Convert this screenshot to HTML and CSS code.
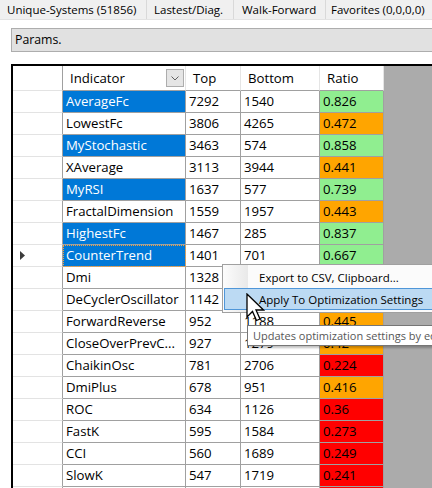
FILE: index.html
```html
<!DOCTYPE html>
<html>
<head>
<meta charset="utf-8">
<link rel="stylesheet" href="styles.css">
</head>
<body>
<div class="tabs">
  <div class="tab t1">Unique-Systems (51856)</div>
  <div class="tab t2">Lastest/Diag.</div>
  <div class="tab t3">Walk-Forward</div>
  <div class="tab t4">Favorites (0,0,0,0)</div>
</div>
<div class="params">Params.</div>
<div class="grid">
  <div class="hc rh"></div>
  <div class="hc ind"><span>Indicator</span><span class="dd"><svg width="8" height="5" viewBox="0 0 8 5"><path d="M0.5 0.5 L4 4 L7.5 0.5" fill="none" stroke="#606060" stroke-width="1"/></svg></span></div>
  <div class="hc">Top</div>
  <div class="hc">Bottom</div>
  <div class="hc">Ratio</div>

  <div class="rh"></div><div class="c sel">AverageFc</div><div class="c">7292</div><div class="c">1540</div><div class="c g">0.826</div>
  <div class="rh"></div><div class="c">LowestFc</div><div class="c">3806</div><div class="c">4265</div><div class="c o">0.472</div>
  <div class="rh"></div><div class="c sel">MyStochastic</div><div class="c">3463</div><div class="c">574</div><div class="c g">0.858</div>
  <div class="rh"></div><div class="c">XAverage</div><div class="c">3113</div><div class="c">3944</div><div class="c o">0.441</div>
  <div class="rh"></div><div class="c sel">MyRSI</div><div class="c">1637</div><div class="c">577</div><div class="c g">0.739</div>
  <div class="rh"></div><div class="c">FractalDimension</div><div class="c">1559</div><div class="c">1957</div><div class="c o">0.443</div>
  <div class="rh"></div><div class="c sel">HighestFc</div><div class="c">1467</div><div class="c">285</div><div class="c g">0.837</div>
  <div class="rh cur"><svg width="5" height="9" viewBox="0 0 5 9"><path d="M0 0 L5 4.5 L0 9 Z" fill="#3c3c3c"/></svg></div><div class="c sel focus">CounterTrend</div><div class="c">1401</div><div class="c">701</div><div class="c g">0.667</div>
  <div class="rh"></div><div class="c">Dmi</div><div class="c">1328</div><div class="c"></div><div class="c"></div>
  <div class="rh"></div><div class="c">DeCyclerOscillator</div><div class="c">1142</div><div class="c"></div><div class="c"></div>
  <div class="rh"></div><div class="c">ForwardReverse</div><div class="c">952</div><div class="c">1188</div><div class="c o">0.445</div>
  <div class="rh"></div><div class="c">CloseOverPrevC...</div><div class="c">927</div><div class="c">1279</div><div class="c o">0.42</div>
  <div class="rh"></div><div class="c">ChaikinOsc</div><div class="c">781</div><div class="c">2706</div><div class="c r">0.224</div>
  <div class="rh"></div><div class="c">DmiPlus</div><div class="c">678</div><div class="c">951</div><div class="c o">0.416</div>
  <div class="rh"></div><div class="c">ROC</div><div class="c">634</div><div class="c">1126</div><div class="c r">0.36</div>
  <div class="rh"></div><div class="c">FastK</div><div class="c">595</div><div class="c">1584</div><div class="c r">0.273</div>
  <div class="rh"></div><div class="c">CCI</div><div class="c">560</div><div class="c">1689</div><div class="c r">0.249</div>
  <div class="rh"></div><div class="c">SlowK</div><div class="c">547</div><div class="c">1719</div><div class="c r">0.241</div>
  <div class="rh"></div><div class="c"></div><div class="c"></div><div class="c"></div><div class="c r"></div>
</div>

<div class="menu">
  <div class="gutter"></div>
  <div class="item">Export to CSV, Clipboard...</div>
  <div class="item hot">Apply To Optimization Settings</div>
</div>
<div class="tip">Updates optimization settings by editing the selected indicators</div>
<svg class="cursor" width="19" height="29" viewBox="0 0 19 29"><path d="M1 1 L1 24 L6.5 18.5 L10.5 27.5 L14 26 L10 17 L17.5 17 Z" fill="#fff" stroke="#000" stroke-width="1.3" stroke-linejoin="miter"/></svg>
</body>
</html>
```

FILE: styles.css
```css
html, body {
  margin: 0;
  padding: 0;
}
body {
  width: 432px;
  height: 488px;
  overflow: hidden;
  position: relative;
  background: #ffffff;
  font-family: "Open Sans", "Noto Sans", sans-serif;
  font-size: 11.5px;
  color: #000;
}
.tabs {
  display: flex;
  height: 20px;
  background: #f0f0f0;
  border-bottom: 1px solid #e3e3e3;
  box-sizing: border-box;
  white-space: nowrap;
}
.tab {
  box-sizing: border-box;
  height: 19px;
  line-height: 19px;
  padding-left: 7px;
  border-right: 1px solid #d9d9d9;
  flex: none;
}
.t1 { width: 147px; }
.t2 { width: 87px; }
.t3 { width: 92px; padding-left: 8px; }
.t4 { width: 140px; padding-left: 5px; border-right: none; }
.params {
  margin: 8px 0 0 11px;
  height: 24px;
  box-sizing: border-box;
  background: #e1e1e1;
  border: 1px solid #adadad;
  border-right: none;
  line-height: 22px;
  padding-left: 3px;
  font-size: 12.3px;
}
.grid {
  margin: 12px 0 0 11px;
  border-top: 2px solid #000;
  border-left: 2px solid #000;
  background: #ababab;
  display: grid;
  grid-template-columns: 50px 123px 55px 79px 64px;
  grid-auto-rows: 22px;
  grid-template-rows: 25px;
  font-size: 13.2px;
}
.grid > div {
  box-sizing: border-box;
  white-space: nowrap;
  overflow: hidden;
}
.hc {
  background: #fff;
  border-right: 1px solid #e5e5e5;
  border-bottom: 1px solid #a0a0a0;
  padding-left: 7px;
  line-height: 24px;
}
.hc.rh {
  border-right: 1px solid #a0a0a0;
  border-bottom: 1px solid #e3e3e3;
}
.hc.ind {
  display: flex;
  align-items: center;
  justify-content: space-between;
  padding-right: 1px;
}
.dd {
  width: 18px;
  height: 18px;
  box-sizing: border-box;
  background: #e5e5e5;
  border: 1px solid #adadad;
  display: flex;
  align-items: center;
  justify-content: center;
}
.rh {
  background: #fff;
  border-right: 1px solid #a0a0a0;
  border-bottom: 1px solid #e3e3e3;
}
.rh.cur {
  display: flex;
  align-items: center;
  padding-left: 7px;
}
.c {
  background: #fff;
  border-right: 1px solid #a0a0a0;
  border-bottom: 1px solid #a0a0a0;
  padding-left: 3px;
  line-height: 21px;
}
.c.sel {
  background: #0078d7;
  color: #fff;
}
.c.focus {
  outline: 1px dotted #f3a13c;
  outline-offset: -1px;
}
.c.g { background: #90ee90; }
.c.o { background: #ffa500; }
.c.r { background: #ff0000; }

.menu {
  position: absolute;
  left: 222px;
  top: 264px;
  width: 240px;
  box-sizing: border-box;
  background: #fbfbfb;
  border: 1px solid #a0a0a0;
  padding: 1px 0 2px 1px;
}
.gutter {
  position: absolute;
  left: 0;
  top: 0;
  bottom: 0;
  width: 25px;
  background: linear-gradient(to right, #fcfcfc, #e9e9e9);
}
.item {
  position: relative;
  height: 22px;
  line-height: 21px;
  padding-left: 34px;
  box-sizing: border-box;
  border: 1px solid transparent;
  white-space: nowrap;
}
.item.hot {
  background: #bcdaf3;
  border-color: #4f96d8;
}
.tip {
  position: absolute;
  left: 247px;
  top: 325px;
  width: 220px;
  height: 21px;
  box-sizing: border-box;
  background: #fff;
  border: 1px solid #767676;
  color: #575757;
  padding-left: 5px;
  line-height: 19px;
  font-size: 11px;
  white-space: nowrap;
  overflow: hidden;
  box-shadow: 2px 2px 2px rgba(0, 0, 0, 0.25);
}
.cursor {
  position: absolute;
  left: 246px;
  top: 293px;
}
```
